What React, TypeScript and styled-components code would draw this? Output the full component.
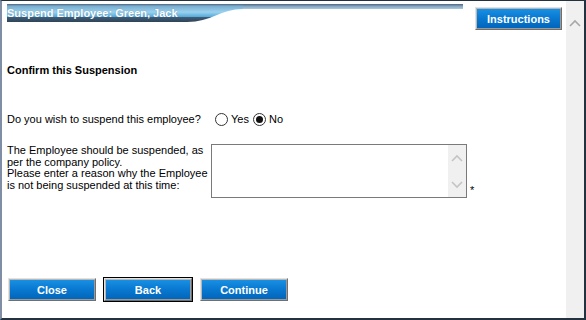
import React from "react";
import styled, { createGlobalStyle, css } from "styled-components";

const GlobalStyle = createGlobalStyle`
  html, body {
    margin: 0;
    padding: 0;
    background: #ffffff;
  }
  body {
    font-family: "Liberation Sans", Arial, sans-serif;
    font-size: 11px;
    color: #000000;
  }
  * {
    box-sizing: border-box;
  }
`;

const Chevron = ({ up, color }: { up?: boolean; color: string }) => (
  <svg width="12" height="8" viewBox="0 0 12 8">
    <path
      d={up ? "M1 7 L6 2 L11 7" : "M1 1 L6 6 L11 1"}
      fill="none"
      stroke={color}
      strokeWidth="1.6"
    />
  </svg>
);

const BannerArt = () => (
  <svg width="456" height="18" viewBox="0 0 456 18" preserveAspectRatio="none">
    <defs>
      <linearGradient id="bannerBody" x1="0" y1="0" x2="0" y2="1">
        <stop offset="0" stopColor="#4e6580" />
        <stop offset="0.12" stopColor="#7aaed0" />
        <stop offset="0.45" stopColor="#9ad2ee" />
        <stop offset="0.7" stopColor="#58acdc" />
        <stop offset="0.74" stopColor="#3f5d78" />
        <stop offset="1" stopColor="#2e4357" />
      </linearGradient>
      <linearGradient id="bannerStrip" x1="0" y1="0" x2="0" y2="1">
        <stop offset="0" stopColor="#4e6580" />
        <stop offset="0.5" stopColor="#86aac4" />
        <stop offset="1" stopColor="#a9c9dc" />
      </linearGradient>
    </defs>
    <rect x="0" y="0" width="456" height="5" fill="url(#bannerStrip)" />
    <path
      d="M0 0 H236 L236 5 C214 5 204 18 180 18 H0 Z"
      fill="url(#bannerBody)"
    />
  </svg>
);

const Frame = styled.div`
  width: 586px;
  height: 320px;
  display: flex;
  border-top: 1px solid #24323f;
  border-left: 2px solid #7f8ea4;
  border-right: 2px solid #24323f;
  border-bottom: 2px solid #24323f;
`;

const Content = styled.div`
  flex: 1;
  display: flex;
  flex-direction: column;
  padding: 3px 0 17px 5px;
`;

const Scrollbar = styled.div`
  width: 18px;
  background: #f0f0f0;
  display: flex;
  justify-content: center;
  padding-top: 18px;
`;

const Header = styled.div`
  display: flex;
  align-items: flex-start;
`;

const Banner = styled.div`
  position: relative;
  width: 456px;
  height: 18px;
  svg {
    position: absolute;
    left: 0;
    top: 0;
  }
`;

const BannerTitle = styled.div`
  position: relative;
  padding-top: 3px;
  font-weight: bold;
  font-size: 11px;
  line-height: 13px;
  color: #ffffff;
  text-shadow: 0 0 1px rgba(40, 80, 110, 0.5);
  white-space: nowrap;
`;

const blueButton = css`
  height: 23px;
  width: 88px;
  border: 1px solid;
  border-color: #e2e2e2 #6f6f6f #6f6f6f #e2e2e2;
  box-shadow: inset 1px 1px 0 #b7b7b7, inset -1px -1px 0 #9a9a9a;
  background: linear-gradient(180deg, #1c93e4 0%, #0a7ad2 45%, #0064b9 100%);
  color: #ffffff;
  font-family: "Liberation Sans", Arial, sans-serif;
  font-weight: bold;
  font-size: 11px;
  padding: 0;
  cursor: pointer;
`;

const InstructionsButton = styled.button`
  ${blueButton};
  width: 87px;
  margin: 3px 4px 0 auto;
`;

const Heading = styled.div`
  margin-top: 34px;
  font-weight: bold;
  line-height: 13px;
`;

const Row = styled.div<{ $top: number }>`
  display: grid;
  grid-template-columns: 204px auto;
  align-items: start;
  margin-top: ${(p) => p.$top}px;
`;

const Label = styled.div`
  line-height: 13px;
  white-space: nowrap;
`;

const Paragraph = styled.div`
  line-height: 11.7px;
  white-space: nowrap;
  padding-top: 1px;
`;

const RadioGroup = styled.div`
  display: flex;
  align-items: center;
  height: 13px;
  padding-left: 4px;
`;

const RadioOption = styled.label`
  display: flex;
  align-items: center;
  gap: 3px;
  margin-right: 4px;
  line-height: 13px;
`;

const RadioDot = styled.span<{ $checked?: boolean }>`
  width: 13px;
  height: 13px;
  border-radius: 50%;
  border: 1px solid #333333;
  background: #ffffff;
  display: flex;
  align-items: center;
  justify-content: center;
  &::after {
    content: "";
    width: 7px;
    height: 7px;
    border-radius: 50%;
    background: ${(p) => (p.$checked ? "#111111" : "transparent")};
  }
`;

const FieldWrap = styled.div`
  display: flex;
  align-items: flex-end;
  gap: 3px;
`;

const TextBox = styled.div`
  width: 256px;
  height: 54px;
  border: 1px solid #7a7a7a;
  display: flex;
  background: #ffffff;
`;

const TextInput = styled.textarea`
  flex: 1;
  border: none;
  resize: none;
  outline: none;
  font-family: "Liberation Sans", Arial, sans-serif;
  font-size: 11px;
  padding: 2px;
`;

const InnerScroll = styled.div`
  width: 18px;
  background: #f0f0f0;
  display: flex;
  flex-direction: column;
  align-items: center;
  justify-content: space-between;
  padding: 9px 0 8px;
`;

const Required = styled.span`
  font-size: 11px;
  line-height: 8px;
  margin-bottom: 4px;
`;

const ButtonRow = styled.div`
  margin-top: auto;
  display: flex;
  gap: 8px;
  padding-left: 1px;
`;

const ActionButton = styled.button<{ $focused?: boolean }>`
  ${blueButton};
  ${(p) =>
    p.$focused &&
    css`
      outline: 1px solid #000000;
      outline-offset: 0;
    `}
`;

export default function App() {
  return (
    <>
      <GlobalStyle />
      <Frame>
        <Content>
          <Header>
            <Banner>
              <BannerArt />
              <BannerTitle>Suspend Employee: Green, Jack</BannerTitle>
            </Banner>
            <InstructionsButton>Instructions</InstructionsButton>
          </Header>

          <Heading>Confirm this Suspension</Heading>

          <Row $top={36}>
            <Label>Do you wish to suspend this employee?</Label>
            <RadioGroup>
              <RadioOption>
                <RadioDot />
                Yes
              </RadioOption>
              <RadioOption>
                <RadioDot $checked />
                No
              </RadioOption>
            </RadioGroup>
          </Row>

          <Row $top={18}>
            <Paragraph>
              The Employee should be suspended, as
              <br />
              per the company policy.
              <br />
              Please enter a reason why the Employee
              <br />
              is not being suspended at this time:
            </Paragraph>
            <FieldWrap>
              <TextBox>
                <TextInput />
                <InnerScroll>
                  <Chevron up color="#c4c4c4" />
                  <Chevron color="#c4c4c4" />
                </InnerScroll>
              </TextBox>
              <Required>*</Required>
            </FieldWrap>
          </Row>

          <ButtonRow>
            <ActionButton>Close</ActionButton>
            <ActionButton $focused>Back</ActionButton>
            <ActionButton>Continue</ActionButton>
          </ButtonRow>
        </Content>
        <Scrollbar>
          <Chevron up color="#a8a8a8" />
        </Scrollbar>
      </Frame>
    </>
  );
}
